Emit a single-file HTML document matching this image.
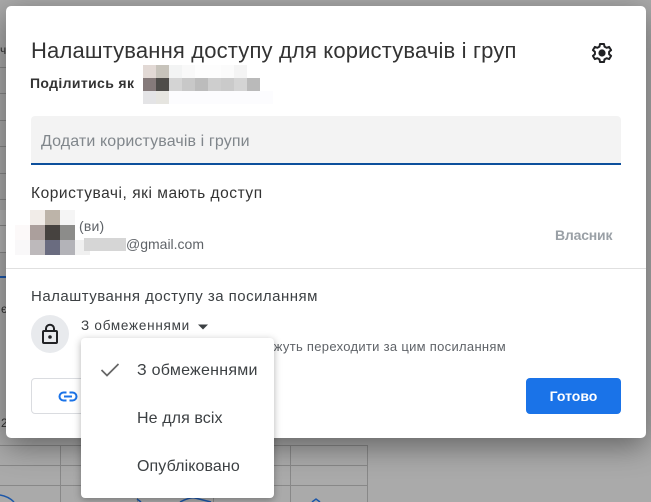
<!DOCTYPE html>
<html lang="uk">
<head>
<meta charset="utf-8">
<style>
html,body{margin:0;padding:0}
body{width:651px;height:502px;overflow:hidden;position:relative;background:#aaa;font-family:"Liberation Sans",sans-serif}
.a{position:absolute;white-space:nowrap}
.p{position:absolute}
#dialog{position:absolute;left:6px;top:6px;width:640px;height:432px;background:#fff;border-radius:5px;box-shadow:0 8px 30px rgba(0,0,0,.42)}
#menu{position:absolute;left:81px;top:338px;width:193px;height:160px;background:#fff;border-radius:4px;box-shadow:0 2px 8px rgba(0,0,0,.3)}
</style>
</head>
<body>
<svg class="p" style="left:0;top:0" width="651" height="502" fill="none">
<rect x="0" y="210" width="6" height="42" fill="#b4b4b4"/>
<g stroke="#888" stroke-width="1">
<path d="M0 67.5H6M0 93.5H6M0 120.5H6M0 146.5H6M0 173.5H6M0 199.5H6M0 225.5H6M0 252.5H6"/>
<path d="M0 445.5H367.5M0 465.5H367.5M0 485.5H367.5"/>
<path d="M60.5 445V502M137.5 445V502M213.5 445V502M290.5 445V502M367.5 445V502"/>
</g>
<g stroke="#1c56a8" stroke-width="1.5">
<path d="M0 495C6 496 11 499 14 502"/>
<path d="M137 499L141 502"/>
<path d="M180 502C186 499 191 497 195 498L211 502"/>
<path d="M312 502L316 499L320 502"/>
</g>
<rect x="0" y="276" width="6" height="2" fill="#1c56a8"/>
</svg>
<div class="a" style="left:0;top:43px;font-size:12px;color:#333">ч</div>
<div class="a" style="left:1px;top:302px;font-size:12px;color:#333">є</div>
<div class="a" style="left:1px;top:416px;font-size:12px;color:#333">2</div>

<div id="dialog"></div>

<div class="a" style="left:31px;top:38px;font-size:22px;line-height:26px;color:#333;letter-spacing:.16px">Налаштування доступу для користувачів і груп</div>
<svg class="p" style="left:590px;top:41px" width="24" height="24" viewBox="0 0 24 24" fill="none">
<path d="M10 3H14L14.5 5.6L16.6 6.8L19.1 5.9L21.1 9.1L19.1 10.8V13.2L21.1 14.9L19.1 18.1L16.6 17.2L14.5 18.4L14 21H10L9.5 18.4L7.4 17.2L4.9 18.1L2.9 14.9L4.9 13.2V10.8L2.9 9.1L4.9 5.9L7.4 6.8L9.5 5.6Z" stroke="#202124" stroke-width="2" stroke-linejoin="round"/>
<circle cx="12" cy="12" r="3.6" fill="#202124"/>
</svg>
<div class="a" style="left:30px;top:75px;font-size:14px;line-height:16px;color:#333;font-weight:bold;letter-spacing:.36px">Поділитись як</div>

<svg class="p" style="left:143px;top:65px" width="130" height="39" shape-rendering="crispEdges">
<rect x="0" y="0" width="13" height="13" fill="#e2d9d5"/><rect x="13" y="0" width="13" height="13" fill="#c7c3bb"/>
<rect x="26" y="0" width="13" height="13" fill="#f3f4f4"/><rect x="39" y="0" width="13" height="13" fill="#f9f9f9"/>
<rect x="52" y="0" width="13" height="13" fill="#fdfdfd"/><rect x="65" y="0" width="13" height="13" fill="#fdfdfd"/>
<rect x="78" y="0" width="13" height="13" fill="#fbfbfb"/><rect x="91" y="0" width="13" height="13" fill="#f4f4f4"/>
<rect x="0" y="13" width="13" height="13" fill="#857a7a"/><rect x="13" y="13" width="13" height="13" fill="#4f4d4a"/>
<rect x="26" y="13" width="13" height="13" fill="#d4d4d4"/><rect x="39" y="13" width="13" height="13" fill="#c8c8c8"/>
<rect x="52" y="13" width="13" height="13" fill="#bcbcbc"/><rect x="65" y="13" width="13" height="13" fill="#cecece"/>
<rect x="78" y="13" width="13" height="13" fill="#cacaca"/><rect x="91" y="13" width="13" height="13" fill="#d4d4d4"/>
<rect x="104" y="13" width="13" height="13" fill="#bababa"/>
<rect x="0" y="26" width="13" height="13" fill="#e4e4e6"/><rect x="13" y="26" width="13" height="13" fill="#e6e5e0"/>
<rect x="26" y="26" width="104" height="13" fill="#fcfcfe"/>
</svg>

<div class="p" style="left:31px;top:116px;width:590px;height:47px;background:#f3f3f3;border-radius:4px 4px 0 0"></div>
<div class="p" style="left:31px;top:163px;width:590px;height:2px;background:#0c4f9c"></div>
<div class="a" style="left:41px;top:133px;font-size:16px;line-height:18px;color:#80868b;letter-spacing:.12px">Додати користувачів і групи</div>

<div class="a" style="left:31px;top:185px;font-size:15.5px;line-height:18px;color:#333;letter-spacing:.54px">Користувачі, які мають доступ</div>

<svg class="p" style="left:15px;top:210px" width="75" height="45" shape-rendering="crispEdges">
<rect x="15" y="0" width="15" height="15" fill="#f1ece8"/><rect x="30" y="0" width="15" height="15" fill="#bdb4a9"/><rect x="45" y="0" width="15" height="15" fill="#f5f5f5"/>
<rect x="0" y="15" width="15" height="15" fill="#fcf9f9"/><rect x="15" y="15" width="15" height="15" fill="#ab9f9c"/><rect x="30" y="15" width="15" height="15" fill="#46423f"/><rect x="45" y="15" width="15" height="15" fill="#8c8c8a"/>
<rect x="0" y="30" width="15" height="15" fill="#f9f8f9"/><rect x="15" y="30" width="15" height="15" fill="#bdb9bb"/><rect x="30" y="30" width="15" height="15" fill="#6a6c80"/><rect x="45" y="30" width="15" height="15" fill="#b3b3b8"/>
<rect x="60" y="30" width="15" height="15" fill="#f0f0f0"/>
</svg>
<div class="p" style="left:84px;top:238px;width:42px;height:13px;background:#d6d6d6"></div>
<div class="a" style="left:79px;top:218px;font-size:14px;line-height:16px;color:#5f6368;letter-spacing:.2px">(ви)</div>
<div class="a" style="left:126px;top:236px;font-size:14px;line-height:16px;color:#5f6368">@gmail.com</div>
<div class="a" style="left:555px;top:227px;font-size:14px;line-height:16px;color:#9aa0a6;font-weight:bold;letter-spacing:-.2px">Власник</div>

<div class="p" style="left:6px;top:268px;width:640px;height:1px;background:#e0e0e0"></div>

<div class="a" style="left:31px;top:288px;font-size:15px;line-height:18px;color:#3c4043;letter-spacing:.48px">Налаштування доступу за посиланням</div>

<div class="p" style="left:31px;top:315px;width:38px;height:38px;border-radius:50%;background:#e8eaed"></div>
<svg class="p" style="left:38px;top:322px" width="24" height="24" viewBox="0 0 24 24" fill="none">
<rect x="5" y="9" width="14" height="12" rx="1" stroke="#202124" stroke-width="2"/>
<path d="M8 9V6.5C8 4.3 9.8 2.8 12 2.8S16 4.3 16 6.5V9" stroke="#202124" stroke-width="2"/>
<circle cx="12" cy="15" r="1.8" fill="#202124"/>
</svg>
<div class="a" style="left:81px;top:318px;font-size:13.5px;line-height:16px;color:#3c4043;letter-spacing:.76px">З обмеженнями</div>
<svg class="p" style="left:198px;top:324px" width="10" height="6"><path d="M0 0.5H10L5 5.5Z" fill="#3c4043"/></svg>
<div class="a" style="right:145px;top:339px;font-size:13px;line-height:16px;color:#5f6368;letter-spacing:.3px">можуть переходити за цим посиланням</div>

<div class="p" style="left:31px;top:378px;width:60px;height:34px;border:1px solid #dadce0;border-radius:4px;background:#fff"></div>
<svg class="p" style="left:58px;top:390px" width="20" height="14" viewBox="0 0 20 14" fill="none">
<path d="M8.5 2.5H5.5C3.3 2.5 1.5 4.3 1.5 6.5S3.3 10.5 5.5 10.5H8.5M11.5 2.5H14.5C16.7 2.5 18.5 4.3 18.5 6.5S16.7 10.5 14.5 10.5H11.5M6 6.5H14" stroke="#1a73e8" stroke-width="2"/>
</svg>

<div class="p" style="left:526px;top:378px;width:95px;height:36px;background:#1a73e8;border-radius:4px"></div>
<div class="a" style="left:526px;top:388px;width:95px;text-align:center;font-size:14px;line-height:16px;color:#fff;font-weight:bold;letter-spacing:0">Готово</div>

<div id="menu"></div>
<svg class="p" style="left:100px;top:362px" width="20" height="16" fill="none"><path d="M1.5 8L7 13.5L18.5 2" stroke="#666" stroke-width="1.7"/></svg>
<div class="a" style="left:137px;top:361px;font-size:16px;line-height:19px;color:#3c4043;letter-spacing:.25px">З обмеженнями</div>
<div class="a" style="left:137px;top:409px;font-size:16px;line-height:19px;color:#3c4043;letter-spacing:.1px">Не для всіх</div>
<div class="a" style="left:137px;top:457px;font-size:16px;line-height:19px;color:#3c4043;letter-spacing:.1px">Опубліковано</div>
</body>
</html>
